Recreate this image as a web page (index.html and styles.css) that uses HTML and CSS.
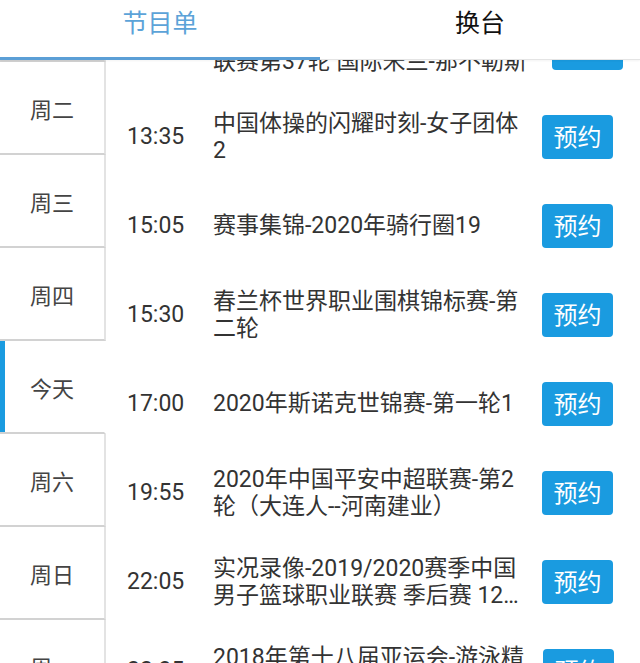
FILE: index.html
```html
<!DOCTYPE html>
<html lang="zh-CN">
<head>
    <meta charset="UTF-8">
    <meta name="viewport" content="width=device-width, initial-scale=1.0">
    <title>节目单</title>
    <link rel="stylesheet" href="styles.css">
</head>
<body>
    <div class="app">
        <div class="tabs">
            <div class="tab active">节目单</div>
            <div class="tab">换台</div>
        </div>
        <div class="panes">
            <div class="days-pane">
                <ul class="days">
                    <li class="day">周一</li>
                    <li class="day">周二</li>
                    <li class="day">周三</li>
                    <li class="day">周四</li>
                    <li class="day today">今天</li>
                    <li class="day">周六</li>
                    <li class="day">周日</li>
                    <li class="day">周一</li>
                </ul>
            </div>
            <div class="programs-pane">
                <ul class="programs">
                    <li class="program">
                        <span class="time">12:00</span>
                        <p class="title">2019/2020赛季意大利足球甲级<br>联赛第37轮 国际米兰-那不勒斯</p>
                        <button class="book">预约</button>
                    </li>
                    <li class="program">
                        <span class="time">13:35</span>
                        <p class="title">中国体操的闪耀时刻-女子团体<br>2</p>
                        <button class="book">预约</button>
                    </li>
                    <li class="program">
                        <span class="time">15:05</span>
                        <p class="title">赛事集锦-2020年骑行圈19</p>
                        <button class="book">预约</button>
                    </li>
                    <li class="program">
                        <span class="time">15:30</span>
                        <p class="title">春兰杯世界职业围棋锦标赛-第<br>二轮</p>
                        <button class="book">预约</button>
                    </li>
                    <li class="program">
                        <span class="time">17:00</span>
                        <p class="title">2020年斯诺克世锦赛-第一轮1</p>
                        <button class="book">预约</button>
                    </li>
                    <li class="program">
                        <span class="time">19:55</span>
                        <p class="title">2020年中国平安中超联赛-第2<br>轮（大连人--河南建业）</p>
                        <button class="book">预约</button>
                    </li>
                    <li class="program">
                        <span class="time">22:05</span>
                        <p class="title">实况录像-2019/2020赛季中国<br>男子篮球职业联赛 季后赛 12…</p>
                        <button class="book">预约</button>
                    </li>
                    <li class="program">
                        <span class="time">22:35</span>
                        <p class="title">2018年第十八届亚运会-游泳精<br>彩集锦</p>
                        <button class="book">预约</button>
                    </li>
                </ul>
            </div>
        </div>
    </div>
</body>
</html>
```

FILE: styles.css
```css
body {
    margin: 0;
    font-family: Roboto, "Noto Sans CJK SC", sans-serif;
    background: #fff;
    color: #333;
}
ul {
    list-style: none;
    margin: 0;
    padding: 0;
}
.app {
    width: 640px;
    height: 663px;
    overflow: hidden;
    display: flex;
    flex-direction: column;
}
.tabs {
    display: flex;
    height: 60px;
    flex-shrink: 0;
    background: #fff;
    position: relative;
    z-index: 1;
    box-shadow: 0 1px 2px rgba(0,0,0,0.05);
}
.tab {
    flex: 1;
    box-sizing: border-box;
    padding-top: 9px;
    text-align: center;
    font-size: 25px;
    line-height: 30px;
    color: #111;
    border-bottom: 1px solid #e4e4e4;
}
.tab.active {
    color: #5ca3d8;
    border-bottom: 3px solid #5b9fd6;
}
.panes {
    flex: 1;
    display: flex;
    overflow: hidden;
}
.days-pane {
    width: 106px;
    flex-shrink: 0;
    overflow: hidden;
}
/* lists are scrolled a little, so the first row sits under the tabs */
.days {
    margin-top: -91px;
}
.day {
    box-sizing: border-box;
    height: 93px;
    display: flex;
    align-items: center;
    justify-content: center;
    font-size: 22px;
    color: #444;
    border-right: 2px solid #e3e3e3;
    border-bottom: 2px solid #d2d2d2;
}
.day.today {
    border-right-color: transparent;
    box-shadow: inset 5px 0 0 #1a9be0;
}
.programs-pane {
    flex: 1;
    overflow: hidden;
}
.programs {
    margin-top: -57px;
}
.program {
    height: 89px;
    display: flex;
    align-items: center;
    padding: 0 27px 0 21px;
}
.time {
    width: 86px;
    flex-shrink: 0;
    font-size: 23px;
    color: #333;
}
.title {
    flex: 1;
    margin: 0 19px 0 0;
    font-size: 23px;
    line-height: 27px;
    color: #333;
    white-space: nowrap;
}
.book {
    width: 71px;
    height: 44px;
    flex-shrink: 0;
    border: none;
    border-radius: 4px;
    background: #1a9be0;
    color: #fff;
    font-family: inherit;
    font-size: 24px;
    padding: 0 0 3px;
}
```
